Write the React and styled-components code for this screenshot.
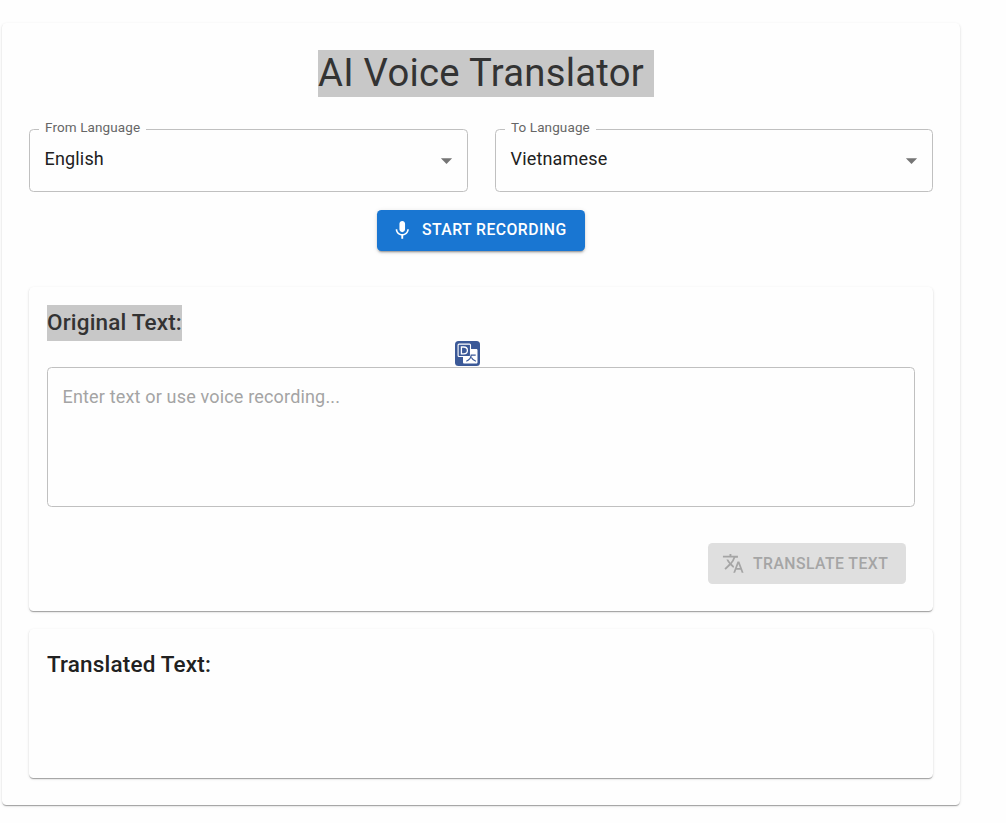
import React from "react";
import styled, { createGlobalStyle } from "styled-components";
import { MdMic, MdTranslate, MdArrowDropDown } from "react-icons/md";

const GlobalStyle = createGlobalStyle`
  *, *::before, *::after { box-sizing: border-box; }
  body {
    margin: 0;
    background: #fefefe;
    color: #212121;
    font-family: Roboto, "Liberation Sans", sans-serif;
  }
`;

const Page = styled.main`
  padding: 23px 46px 18px 2px;
`;

const Paper = styled.section`
  background: #fefefe;
  border-radius: 4.5px;
  box-shadow: 0 2px 1px -1px rgba(0, 0, 0, 0.2), 0 1px 1px 0 rgba(0, 0, 0, 0.14),
    0 1px 3px 0 rgba(0, 0, 0, 0.12);
`;

const TranslatorPaper = styled(Paper)`
  display: flex;
  flex-direction: column;
  height: 782px;
  padding: 27px;
`;

const Panel = styled(Paper)`
  position: relative;
  display: flex;
  flex-direction: column;
  align-items: flex-start;
  height: ${({ $height }) => $height}px;
  margin-top: ${({ $gap }) => $gap}px;
  padding: 18px;
`;

const Title = styled.h1`
  display: flex;
  justify-content: center;
  margin: 0 0 32px;
  padding-left: 10px;
  font-size: 38.25px;
  font-weight: 400;
  line-height: 47px;
  letter-spacing: 0.28px;
`;

const TitleSelection = styled.span`
  padding-right: 10px;
  background: #c8c8c8;
  color: #333;
`;

const PanelTitle = styled.h2`
  margin: 0;
  padding-bottom: 2px;
  font-size: 22.5px;
  font-weight: 500;
  line-height: 34px;
  letter-spacing: 0.17px;
  ${({ $selected }) => $selected && "background: #c8c8c8; color: #333;"}
`;

const LanguageRow = styled.div`
  display: grid;
  grid-template-columns: 439px 438px;
  gap: 27px;
`;

const SelectBox = styled.div`
  position: relative;
  display: flex;
  align-items: flex-start;
  justify-content: space-between;
  height: 63px;
  padding: 16px 7px 0 14.5px;
  border: 1px solid #c0c0c0;
  border-radius: 4.5px;
  font-size: 18px;
  line-height: 26px;
  letter-spacing: 0.17px;

  svg {
    flex-shrink: 0;
    margin-top: 1px;
    color: #757575;
  }
`;

const SelectLabel = styled.span`
  position: absolute;
  top: -12px;
  left: 9px;
  padding: 0 6px;
  background: #fefefe;
  color: #666;
  font-size: 13.5px;
  line-height: 18px;
  letter-spacing: 0.11px;
`;

const Button = styled.button`
  display: flex;
  align-items: center;
  gap: 9px;
  height: 41px;
  padding: 0 17px 0 13.5px;
  border: 0;
  border-radius: 4.5px;
  background: #1976d2;
  color: #fff;
  font: 500 15.75px/28px Roboto, "Liberation Sans", sans-serif;
  letter-spacing: 0.45px;
  white-space: nowrap;
  box-shadow: 0 3px 1px -2px rgba(0, 0, 0, 0.2), 0 2px 2px 0 rgba(0, 0, 0, 0.14),
    0 1px 5px 0 rgba(0, 0, 0, 0.12);

  svg {
    flex-shrink: 0;
  }

  &:disabled {
    background: #dfdfdf;
    color: #a5a5a5;
    box-shadow: none;
  }
`;

const ButtonText = styled.span`
  padding-bottom: ${({ $lift = 0 }) => $lift}px;
`;

const RecordButton = styled(Button)`
  align-self: center;
  width: 208px;
  margin-top: 18px;
`;

const TranslateButton = styled(Button)`
  align-self: flex-end;
  width: 198px;
  margin: 36px 9px 0 0;
`;

const TextInput = styled.textarea`
  display: block;
  width: 100%;
  height: 140px;
  margin-top: 26px;
  padding: 16px 14.5px;
  border: 1px solid #c0c0c0;
  border-radius: 4.5px;
  outline: 0;
  resize: none;
  background: transparent;
  font: 400 18px/26px Roboto, "Liberation Sans", sans-serif;
  letter-spacing: 0.17px;

  &::placeholder {
    color: #a4a4a4;
    opacity: 1;
  }
`;

const DictionaryBadge = styled.svg`
  position: absolute;
  top: 54px;
  left: 426px;
`;

function LanguageSelect({ label, value }) {
  return (
    <SelectBox>
      <SelectLabel>{label}</SelectLabel>
      <span>{value}</span>
      <MdArrowDropDown size={27} />
    </SelectBox>
  );
}

function DictionaryIcon() {
  return (
    <DictionaryBadge width="25" height="25" viewBox="0 0 25 25" fill="none">
      <rect width="25" height="25" rx="3.5" fill="#3b5998" />
      <path d="M16 8h5.2c.8 0 1.3.5 1.3 1.3v11.9c0 .8-.5 1.3-1.3 1.3H9.3c-.8 0-1.3-.5-1.3-1.3V16h8z" fill="#fff" />
      <rect x="3.1" y="3.1" width="12.4" height="12.4" rx="1" fill="#3b5998" stroke="#fff" strokeWidth="1.1" />
      <path d="M6.4 6h2.3c2.3 0 3.7 1.3 3.7 3.4s-1.4 3.4-3.7 3.4H6.4z" stroke="#fff" strokeWidth="1.3" />
      <path d="M16.5 14.2h4.2M16.3 13.5c-.1 3.2-1.7 5.3-5 6.8M16.4 16.6c.8 1.7 2.2 2.9 4.5 3.7" stroke="#3b5998" strokeWidth="1.2" />
    </DictionaryBadge>
  );
}

export default function App() {
  return (
    <>
      <GlobalStyle />
      <Page>
        <TranslatorPaper>
          <Title>
            <TitleSelection>AI Voice Translator</TitleSelection>
          </Title>
          <LanguageRow>
            <LanguageSelect label="From Language" value="English" />
            <LanguageSelect label="To Language" value="Vietnamese" />
          </LanguageRow>
          <RecordButton>
            <MdMic size={22.5} />
            <ButtonText $lift={2}>START RECORDING</ButtonText>
          </RecordButton>
          <Panel $height={324} $gap={36}>
            <PanelTitle $selected>Original Text:</PanelTitle>
            <TextInput placeholder="Enter text or use voice recording..." />
            <DictionaryIcon />
            <TranslateButton disabled>
              <MdTranslate size={22.5} />
              <ButtonText>TRANSLATE TEXT</ButtonText>
            </TranslateButton>
          </Panel>
          <Panel $height={149} $gap={18}>
            <PanelTitle>Translated Text:</PanelTitle>
          </Panel>
        </TranslatorPaper>
      </Page>
    </>
  );
}
